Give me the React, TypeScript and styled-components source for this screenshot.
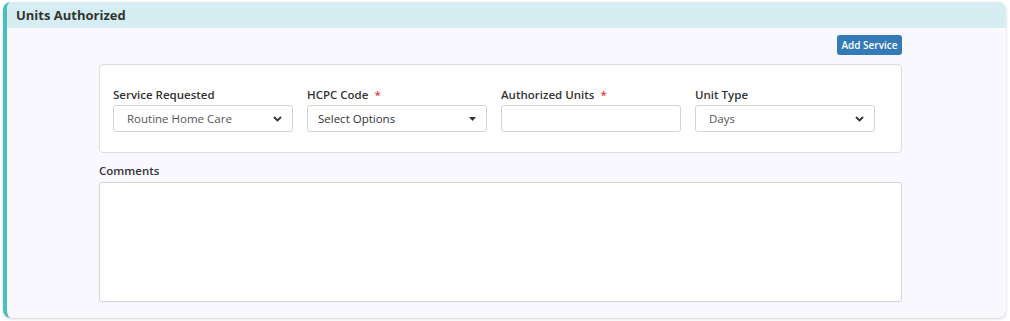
import React from "react";
import styled, { createGlobalStyle } from "styled-components";

const Global = createGlobalStyle`
  html, body { margin: 0; padding: 0; background: #ffffff; }
  body { font-family: "Open Sans", "Noto Sans", sans-serif; color: #333; }
  * { box-sizing: border-box; }
`;

const Page = styled.div`
  padding: 2px 4px 3px 3px;
`;

const Card = styled.section`
  background: #f9f8fe;
  border-left: 4px solid #4bbfb9;
  border-radius: 8px;
  box-shadow: 0 1px 3px rgba(0, 0, 0, 0.18);
  overflow: hidden;
  height: 316px;
  display: flex;
  flex-direction: column;
`;

const Header = styled.header`
  background: #d6eef2;
  height: 28px;
  display: flex;
  align-items: center;
  padding-left: 9px;
  font-size: 13px;
  font-weight: 700;
  color: #333;
`;

const Body = styled.div`
  padding: 7px 104px 16px 92px;
  display: flex;
  flex-direction: column;
`;

const ButtonRow = styled.div`
  display: flex;
  justify-content: flex-end;
`;

const AddButton = styled.button`
  height: 20px;
  width: 65px;
  padding: 0;
  border: none;
  border-radius: 3px;
  background: #337ab7;
  color: #fff;
  font-family: "Open Sans", sans-serif;
  font-size: 10px;
  font-weight: 600;
  line-height: 20px;
  cursor: pointer;
`;

const FieldBox = styled.div`
  margin-top: 9px;
  height: 89px;
  background: #fff;
  border: 1px solid #dcdcdc;
  border-radius: 4px;
  padding: 19px 26px 0 13px;
  display: grid;
  grid-template-columns: repeat(4, 180px);
  column-gap: 14px;
`;

const Field = styled.div`
  display: flex;
  flex-direction: column;
`;

const Label = styled.label`
  font-size: 11.5px;
  font-weight: 600;
  color: #333;
  height: 21px;
  line-height: 18px;
  display: flex;
  align-items: center;
  gap: 6px;
`;

const Star = styled.span`
  color: #e03a3a;
  font-weight: 600;
`;

const Control = styled.div<{ $indent?: number }>`
  height: 27px;
  border: 1px solid #d4d4d4;
  border-radius: 3px;
  background: #fff;
  display: flex;
  align-items: center;
  justify-content: space-between;
  padding: 0 10px 0 ${(p) => p.$indent ?? 13}px;
  font-size: 11.5px;
  color: #555;
`;

const ValueText = styled.span<{ $dark?: boolean }>`
  color: ${(p) => (p.$dark ? "#333" : "#555")};
`;

const CommentsLabel = styled.div`
  margin-top: 10px;
  font-size: 11.5px;
  font-weight: 600;
  color: #333;
  height: 17px;
  line-height: 16px;
`;

const TextArea = styled.div`
  margin-top: 2px;
  height: 120px;
  background: #fff;
  border: 1px solid #d4d4d4;
  border-radius: 3px;
`;

const Chevron = () => (
  <svg width="9" height="6" viewBox="0 0 9 6">
    <path d="M1 1 L4.5 4.5 L8 1" fill="none" stroke="#333" strokeWidth="1.8" />
  </svg>
);

const Caret = () => (
  <svg width="7" height="4" viewBox="0 0 7 4">
    <path d="M0 0 L7 0 L3.5 4 Z" fill="#333" />
  </svg>
);

export default function App() {
  return (
    <>
      <Global />
      <Page>
        <Card>
          <Header>Units Authorized</Header>
          <Body>
            <ButtonRow>
              <AddButton>Add Service</AddButton>
            </ButtonRow>
            <FieldBox>
              <Field>
                <Label>Service Requested</Label>
                <Control>
                  <ValueText>Routine Home Care</ValueText>
                  <Chevron />
                </Control>
              </Field>
              <Field>
                <Label>
                  HCPC Code <Star>*</Star>
                </Label>
                <Control $indent={10}>
                  <ValueText $dark>Select Options</ValueText>
                  <Caret />
                </Control>
              </Field>
              <Field>
                <Label>
                  Authorized Units <Star>*</Star>
                </Label>
                <Control />
              </Field>
              <Field>
                <Label>Unit Type</Label>
                <Control>
                  <ValueText>Days</ValueText>
                  <Chevron />
                </Control>
              </Field>
            </FieldBox>
            <CommentsLabel>Comments</CommentsLabel>
            <TextArea />
          </Body>
        </Card>
      </Page>
    </>
  );
}
